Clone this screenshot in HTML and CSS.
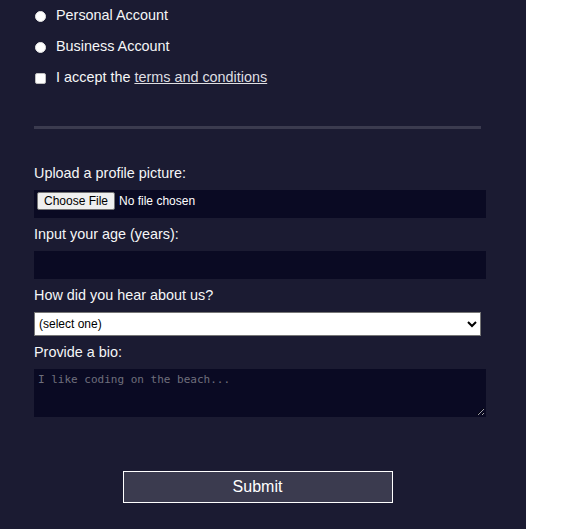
FILE: index.html
```html
<!DOCTYPE html>
<html lang="en">
<head>
<meta charset="utf-8">
<title>Survey Form</title>
<link rel="stylesheet" href="styles.css">
</head>
<body>
<div class="page">
  <form class="form">
    <fieldset class="choices">
      <label class="choice"><input type="radio" name="account" class="radio"><span>Personal Account</span></label>
      <label class="choice"><input type="radio" name="account" class="radio"><span>Business Account</span></label>
      <label class="choice"><input type="checkbox" class="check"><span>I accept the <a href="#" class="link">terms and conditions</a></span></label>
    </fieldset>
    <fieldset class="fields">
      <label class="field-label" for="pic">Upload a profile picture:</label>
      <input id="pic" type="file" class="field file">
      <label class="field-label" for="age">Input your age (years):</label>
      <input id="age" type="number" class="field">
      <label class="field-label" for="referrer">How did you hear about us?</label>
      <select id="referrer" class="select">
        <option>(select one)</option>
        <option>freeCodeCamp News</option>
        <option>freeCodeCamp YouTube Channel</option>
        <option>freeCodeCamp Forum</option>
        <option>Other</option>
      </select>
      <label class="field-label" for="bio">Provide a bio:</label>
      <textarea id="bio" class="field bio" placeholder="I like coding on the beach..."></textarea>
    </fieldset>
    <input type="submit" class="submit" value="Submit">
  </form>
</div>
</body>
</html>
```

FILE: styles.css
```css
html, body {
  margin: 0;
  padding: 0;
}

body {
  background: #ffffff;
  font-family: "Liberation Sans", Arial, sans-serif;
  font-size: 14.4px;
  color: #f5f6f7;
}

.page {
  width: 526px;
  min-height: 529px;
  box-sizing: border-box;
  background: #1b1b32;
  padding-left: 34px;
  overflow: hidden;
}

.form {
  width: 447px;
}

fieldset {
  margin: 0;
  padding: 0;
  border: 0;
  min-width: 0;
}

.choices {
  display: flex;
  flex-direction: column;
  gap: 12px;
  padding: 6px 0 39px;
  border-bottom: 3px solid #3b3b4f;
}

.choice {
  display: flex;
  align-items: center;
  height: 19px;
  line-height: 19px;
}

.radio,
.check {
  appearance: none;
  -webkit-appearance: none;
  box-sizing: border-box;
  width: 11px;
  height: 11px;
  margin: 2px 10px 0 1px;
  background: #ffffff;
  flex: none;
}

.radio {
  border-radius: 50%;
  border: 1px solid #e6e6e6;
}

.check {
  border-radius: 2px;
  border: 1px solid #bfbfbf;
}

.link {
  color: #dfdfe2;
  text-decoration: underline;
}

.fields {
  display: flex;
  flex-direction: column;
  align-items: flex-start;
  padding-top: 35px;
}

.field-label {
  display: block;
  line-height: 19px;
  margin-bottom: 7px;
}

.field {
  display: block;
  box-sizing: border-box;
  width: 452px;
  height: 28px;
  margin: 0 0 7px;
  background: #0a0a23;
  border: 1px solid #0a0a23;
  color: #ffffff;
  font-family: "Liberation Sans", Arial, sans-serif;
  font-size: 12px;
  outline: none;
}

.file {
  padding: 1px 2px;
}

.file::file-selector-button {
  font-family: "Liberation Sans", Arial, sans-serif;
  font-size: 12px;
  height: 18px;
  padding: 0 6px;
  margin: 0 4px 0 0;
  color: #000000;
  background: #efefef;
  border: 1px solid #767676;
  border-radius: 2px;
}

.select {
  display: block;
  box-sizing: border-box;
  width: 447px;
  height: 24px;
  margin: 0 0 7px;
  padding: 0;
  background: #ffffff;
  color: #000000;
  border: 1px solid #767676;
  border-radius: 0;
  font-family: "Liberation Sans", Arial, sans-serif;
  font-size: 12px;
}

.bio {
  height: 48px;
  padding: 3px 3px;
  margin: 0;
  font-family: "DejaVu Sans Mono", "Liberation Mono", monospace;
  font-size: 11px;
  resize: both;
}

.bio::placeholder {
  color: #6f6f7c;
}

.submit {
  display: block;
  box-sizing: border-box;
  width: 270px;
  height: 32px;
  margin: 54px auto 0;
  background: #3b3b4f;
  border: 1px solid #ffffff;
  color: #ffffff;
  font-family: "Liberation Sans", Arial, sans-serif;
  font-size: 16px;
}
```
